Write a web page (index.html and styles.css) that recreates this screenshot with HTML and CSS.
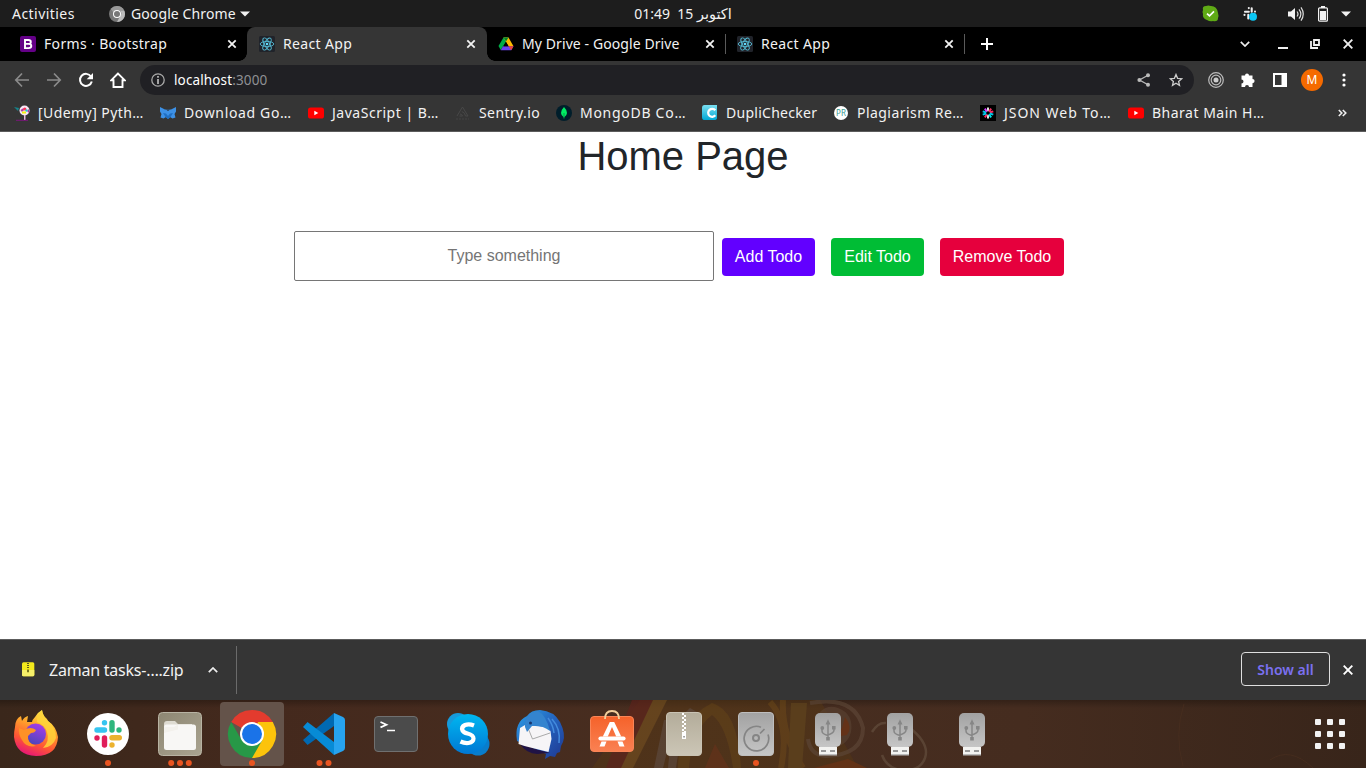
FILE: index.html
```html
<!DOCTYPE html>
<html lang="en">
<head>
<meta charset="utf-8">
<title>React App</title>
<link rel="stylesheet" href="styles.css">
</head>
<body>
<svg class="defs" width="0" height="0" aria-hidden="true">
  <defs>
    <linearGradient id="gFox" x1=".7" y1="0" x2=".3" y2="1"><stop offset="0" stop-color="#fff44f"/><stop offset=".35" stop-color="#ffa42b"/><stop offset=".7" stop-color="#ff5634"/><stop offset="1" stop-color="#e5127b"/></linearGradient>
    <linearGradient id="gGlobe" x1=".7" y1="0" x2=".3" y2="1"><stop offset="0" stop-color="#a63bea"/><stop offset="1" stop-color="#4a46b8"/></linearGradient>
    <linearGradient id="gFiles" x1="0" y1="0" x2="1" y2="1"><stop offset="0" stop-color="#8d8672"/><stop offset="1" stop-color="#aaa491"/></linearGradient>
    <linearGradient id="gSkype" x1="0" y1="0" x2="0" y2="1"><stop offset="0" stop-color="#00b7f0"/><stop offset="1" stop-color="#0078d4"/></linearGradient>
    <linearGradient id="gBird" x1="0" y1="0" x2="1" y2="1"><stop offset="0" stop-color="#2ba0e8"/><stop offset=".5" stop-color="#2462bd"/><stop offset="1" stop-color="#1e3790"/></linearGradient>
    <linearGradient id="gSoft" x1="0" y1="0" x2="0" y2="1"><stop offset="0" stop-color="#f5622a"/><stop offset="1" stop-color="#fa8153"/></linearGradient>
    <linearGradient id="gGrey" x1="0" y1="0" x2="0" y2="1"><stop offset="0" stop-color="#a2a2a2"/><stop offset="1" stop-color="#c6c6c6"/></linearGradient>
    <linearGradient id="gZip" x1="0" y1="0" x2="0" y2="1"><stop offset="0" stop-color="#b3ac9a"/><stop offset="1" stop-color="#ccc6b6"/></linearGradient>
    <linearGradient id="gDupli" x1="0" y1="0" x2="0" y2="1"><stop offset="0" stop-color="#7bdff0"/><stop offset="1" stop-color="#00a8d6"/></linearGradient>
    <symbol id="close" viewBox="0 0 16 16"><path d="M4.300 4.300l7.400 7.400M11.700 4.300l-7.400 7.400" stroke="currentColor" stroke-width="1.800" fill="none"/></symbol>
    <symbol id="react" viewBox="0 0 16 16"><rect width="16" height="16" rx="1.500" fill="#20232a"/><g fill="none" stroke="#55b9d2" stroke-width=".9"><ellipse cx="8" cy="8" rx="6.800" ry="2.600"/><ellipse cx="8" cy="8" rx="6.800" ry="2.600" transform="rotate(60 8 8)"/><ellipse cx="8" cy="8" rx="6.800" ry="2.600" transform="rotate(120 8 8)"/></g><circle cx="8" cy="8" r="1.300" fill="#61dafb"/></symbol>
    <symbol id="youtube" viewBox="0 0 16 16"><rect y="2.500" width="16" height="11" rx="2.600" fill="#f00"/><path d="M6.300 5.700v4.600l4-2.300z" fill="#fff"/></symbol>
    <symbol id="usb" viewBox="0 0 64 66"><path d="M23 45h18v8H23z" fill="#f3f3f1"/><path d="M23 52h18v1.500H23z" fill="#bbb"/><path d="M25 48h5v2h-5zM34 48h5v2h-5z" fill="#999"/><rect x="19" y="11" width="26" height="34" rx="5" fill="url(#gGrey)"/><path d="M32 22v14M26 27v2q0 3 6 4.500M38 27v1q0 3-6 5" stroke="#868686" stroke-width="1.500" fill="none"/><path d="M29.500 22.500h5L32 17.300z" fill="#868686"/><circle cx="26.300" cy="26" r="1.900" fill="#868686"/><path d="M36 24h3.600v3.600H36zM30.200 35h3.600v3.600h-3.600z" fill="#868686"/></symbol>
  </defs>
</svg>

<header class="topbar">
  <span class="activities">Activities</span>
  <span class="app-menu">
    <svg width="16" height="16" viewBox="0 0 16 16"><circle cx="8" cy="8" r="8" fill="#777"/><path d="M8 0a8 8 0 0 1 7 4.200H8A3.800 3.800 0 0 0 4.500 6.500L1.700 3A8 8 0 0 1 8 0z" fill="#999"/><path d="M15.200 4.500A8 8 0 0 1 8 16l3.300-6.200a3.800 3.800 0 0 0-.5-5.300z" fill="#bbb"/><circle cx="8" cy="8" r="4" fill="#fff"/><circle cx="8" cy="8" r="3" fill="#777"/></svg>
    <span class="app-name">Google Chrome</span>
    <svg width="10" height="6" viewBox="0 0 10 6"><path d="M0 .5h10L5 5.500z" fill="#f2f2f2"/></svg>
  </span>
  <span class="clock"><span class="digits">01:49&nbsp; 15 </span><span class="month">اكتوبر</span></span>
  <span class="tray">
    <svg width="17" height="17" viewBox="0 0 17 17"><path d="M1 5Q0 1 4 1q2-1 5 0 6 0 7 7 1 3 0 5 0 4-5 3-3 1-6-1Q0 13 1 9 0 7 1 5z" fill="#5faa15"/><path d="M5 8.600l2.500 2.300L12 6.300" stroke="#fff" stroke-width="1.700" fill="none"/></svg>
    <svg width="16" height="16" viewBox="0 0 16 16"><g stroke="#eee" stroke-width="2.100" stroke-linecap="round"><path d="M6.800 2v.1M3 5.700h3.800M9.700 2.200v3.500M13 5.500v.1M2.500 8.800v.1M6.300 8.800v3.600M9.300 8.800h3.700"/></g><circle cx="11" cy="10.800" r="4" fill="#0bc7f5"/></svg>
    <svg width="17" height="16" viewBox="0 0 17 16"><path d="M1 5.500h3L8 2v12l-4-3.500H1z" fill="#f2f2f2"/><path d="M10 5.500q2 2.500 0 5M12 3.300q3.700 4.700 0 9.400M14 1.300q4.500 6.700 0 13.400" fill="none" stroke="#ddd" stroke-width="1.200"/></svg>
    <svg width="10" height="16" viewBox="0 0 10 16"><path d="M3 0h4v2H3z" fill="#f2f2f2"/><rect x=".6" y="1.800" width="8.800" height="13.400" rx="1" fill="none" stroke="#f2f2f2" stroke-width="1.200"/><path d="M2 5h6v9H2z" fill="#f2f2f2"/></svg>
    <svg width="10" height="6" viewBox="0 0 10 6"><path d="M0 .5h10L5 5.500z" fill="#f2f2f2"/></svg>
  </span>
</header>

<nav class="tabstrip">
  <div class="tab">
    <svg class="fav" viewBox="0 0 16 16"><rect width="16" height="16" rx="2" fill="#640087"/><path d="M5 4h3.400q2.400 0 2.400 1.900Q10.800 7.900 8.600 7.900q2.700 0 2.700 2.100 0 2.100-2.700 2.100H5zM5 7.900h3.600" fill="none" stroke="#fff" stroke-width="1.900"/></svg>
    <span class="tab-title t-forms">Forms · Bootstrap</span><svg class="x"><use href="#close"/></svg>
  </div>
  <div class="tab active"><svg class="fav"><use href="#react"/></svg><span class="tab-title">React App</span><svg class="x"><use href="#close"/></svg></div>
  <div class="tab ruled">
    <svg class="fav" viewBox="0 0 16 16"><path d="M5.500 1.500h5L5 10.500l-2.300 3.600L.5 10z" fill="#00ac47"/><path d="M5.500 1.500h5l5 8.800h-5z" fill="#ffba00"/><path d="M5.500 1.500h5L8 5.600z" fill="#00832d"/><path d="M5 10.300h10.500l-2.300 4H2.700z" fill="#6a42f0"/><path d="M10.600 10.300h4.900l-2.300 4z" fill="#ea4335"/><path d="M8 6l2.500 4.300h-5z" fill="#000"/></svg>
    <span class="tab-title t-drive">My Drive - Google Drive</span><svg class="x"><use href="#close"/></svg>
  </div>
  <div class="tab ruled"><svg class="fav"><use href="#react"/></svg><span class="tab-title">React App</span><svg class="x"><use href="#close"/></svg></div>
  <svg class="new-tab" width="12" height="12" viewBox="0 0 12 12"><path d="M6 0v12M0 6h12" stroke="#fff" stroke-width="2"/></svg>
  <div class="win-controls">
    <svg width="10" height="6" viewBox="0 0 10 6"><path d="M.8.8L5 5 9.200.8" stroke="#eee" stroke-width="1.700" fill="none"/></svg>
    <svg width="10" height="10" viewBox="0 0 10 10"><path d="M0 9h10" stroke="#eee" stroke-width="2"/></svg>
    <svg width="10" height="10" viewBox="0 0 10 10"><path d="M4 1h5v5H4zM1 2v7h7" stroke="#eee" stroke-width="1.800" fill="none"/></svg>
    <svg width="10" height="10" viewBox="0 0 10 10"><path d="M.7.7l8.600 8.600M9.300.7L.7 9.300" stroke="#eee" stroke-width="1.900"/></svg>
  </div>
</nav>

<div class="toolbar">
  <svg width="16" height="16" viewBox="0 0 16 16"><path d="M15 8H2M8 1.500L1.800 8 8 14.500" stroke="#8b8b8b" stroke-width="1.700" fill="none"/></svg>
  <svg width="16" height="16" viewBox="0 0 16 16"><path d="M1 8h13M8 1.500L14.200 8 8 14.500" stroke="#8b8b8b" stroke-width="1.700" fill="none"/></svg>
  <svg width="16" height="16" viewBox="0 0 16 16"><path d="M13 4.500A6 6 0 1 0 13.800 9.500" stroke="#fff" stroke-width="2" fill="none"/><path d="M15 1v6.300H8.700z" fill="#fff"/></svg>
  <svg width="16" height="16" viewBox="0 0 16 16"><path d="M8 1.500L1.300 8.200H3.500V15h9V8.200h2.200z" stroke="#fff" stroke-width="1.900" fill="none"/></svg>
  <div class="omnibox">
    <svg width="14" height="14" viewBox="0 0 14 14"><circle cx="7" cy="7" r="6.200" stroke="#aaa" stroke-width="1.300" fill="none"/><path d="M7 3v1.700M7 6v5" stroke="#bbb" stroke-width="1.700"/></svg>
    <span class="url">localhost<span class="port">:3000</span></span>
    <svg width="14" height="14" viewBox="0 0 14 14"><path d="M11 2.200L2.500 7 11 11.800" stroke="#bbb" stroke-width="1.300" fill="none"/><g fill="#bbb"><circle cx="11" cy="2.300" r="2"/><circle cx="2.400" cy="7" r="2"/><circle cx="11" cy="11.700" r="2"/></g></svg>
    <svg class="star" width="14" height="14" viewBox="0 0 14 14"><path d="M7 1.500l1.600 3.800 4.100.4-3.100 2.700.9 4L7 10.300l-3.500 2.100.9-4L1.300 5.700l4.100-.4z" stroke="#ccc" stroke-width="1.300" fill="none"/></svg>
  </div>
  <svg class="target" width="16" height="16" viewBox="0 0 16 16"><g stroke="#bbb" stroke-width="1.200" fill="none"><circle cx="8" cy="8" r="7.300"/><circle cx="8" cy="8" r="4.800"/></g><circle cx="8" cy="8" r="2.500" fill="#ccc"/></svg>
  <svg class="puzzle" width="16" height="16" viewBox="0 0 16 16"><path d="M1.500 3.500H5a2 2 0 1 1 4 0h3.500V7a2 2 0 1 1 0 4.200V15H9a2 2 0 0 0-4 0H1.500v-3.500a2 2 0 0 0 0-4z" fill="#fff"/></svg>
  <svg class="panel" width="14" height="14" viewBox="0 0 14 14"><path d="M1 1h12v12H1z" fill="none" stroke="#fff" stroke-width="2"/><path d="M8.500 1H13v12H8.500z" fill="#fff"/></svg>
  <span class="avatar">M</span>
  <svg class="dots" width="4" height="14" viewBox="0 0 4 14"><g fill="#fff"><circle cx="2" cy="2" r="1.600"/><circle cx="2" cy="7" r="1.600"/><circle cx="2" cy="12" r="1.600"/></g></svg>
</div>

<div class="bookmarks">
  <a class="bm w146"><svg class="fav" viewBox="0 0 16 16"><path d="M0 2l5 1-1 3-2-2z" fill="#16848b"/><circle cx="10.500" cy="5.500" r="5" fill="#f7e8f5"/><path d="M6.500 5l3-2 .5 2-2 2zM13 6l2-2v4z" fill="#ae3aa4"/><circle cx="10.800" cy="4" r="1.600" fill="#f35"/><circle cx="12.500" cy="5.500" r="1.200" fill="#2cc"/><path d="M8 6.500h4v2H8z" fill="#f2f20a"/><path d="M10 10h1.500v5H10z" fill="#e5b8df"/><path d="M2 15.300h12" stroke="#7c167c"/></svg><span class="b1">[Udemy] Pyth…</span></a>
  <a class="bm w148"><svg class="fav" viewBox="0 0 16 16"><path d="M0 2l5 2.500h6L16 2v4.500l-1.500 2.500 1 3.500-3 1L10 12l-2 2-2-2-2.500 1.500-3-1 1-3.500L0 6.500z" fill="#3d91e6"/><path d="M3 8l3 .5L8 11l2-2.500L13 8l-2.500 4L8 14l-2.500-2z" fill="#1f6fc4"/><path d="M6 4.500h4L8 6z" fill="#2b333c"/></svg><span class="b2">Download Go…</span></a>
  <a class="bm w147"><svg class="fav"><use href="#youtube"/></svg><span class="b3">JavaScript | B…</span></a>
  <a class="bm w101"><svg class="fav" viewBox="0 0 16 16"><path d="M2 11L7.500 2 13 11h-2.500Q10 7.500 6.800 6.500M4.500 11h3Q7 9 5 9" fill="none" stroke="#484848" stroke-width="1"/><path d="M1 14h13" stroke="#444" stroke-dasharray="2 1"/></svg><span class="b4">Sentry.io</span></a>
  <a class="bm w146"><svg class="fav" viewBox="0 0 16 16"><circle cx="8" cy="8" r="8" fill="#001e2b"/><path d="M8 2q-3 3-3 6 0 2.500 3 4.500 3-2 3-4.500 0-3-3-6z" fill="#00ed64"/><path d="M8 8v5.500" stroke="#00a04b"/></svg><span class="b5">MongoDB Co…</span></a>
  <a class="bm w131"><svg class="fav" viewBox="0 0 16 16"><path d="M2.500 0H15v13q0 2-3 2H2Q0 15 0 12V3q0-3 2.500-3z" fill="url(#gDupli)"/><path d="M13.300 5.300A4 4 0 1 0 13.300 10.300" fill="none" stroke="#fff" stroke-width="2.200"/></svg><span class="b6">DupliChecker</span></a>
  <a class="bm w147"><svg class="fav" viewBox="0 0 16 16"><circle cx="8" cy="8" r="7" fill="#fff"/><text x="8" y="10.700" text-anchor="middle" font-size="8" fill="#3b9c93" font-family="Noto Sans, sans-serif">PR</text></svg><span class="b7">Plagiarism Re…</span></a>
  <a class="bm w148"><svg class="fav" viewBox="0 0 16 16"><path d="M0 0h16v16H0z" fill="#000"/><g stroke-width="1.900"><path d="M8 6.300V2.500M8 9.700v3.800" stroke="#eee"/><path d="M9 6.600l2.200-3M7 9.400l-2.200 3M9.700 7.500l3.600-1.200" stroke="#fb2e62"/><path d="M6.300 8.500L2.700 9.700M9.700 8.500l3.600 1.200M6.300 7.500L2.700 6.300" stroke="#00c6e8"/><path d="M9 9.400l2.200 3" stroke="#00e7e7"/><path d="M7 6.600l-2.200-3" stroke="#d63aff"/></g></svg><span class="b8">JSON Web To…</span></a>
  <a class="bm"><svg class="fav"><use href="#youtube"/></svg><span class="b9">Bharat Main H…</span></a>
  <svg class="more" width="9" height="8" viewBox="0 0 9 8"><path d="M.8 1l3 3-3 3M4.800 1l3 3-3 3" fill="none" stroke="#eee" stroke-width="1.600"/></svg>
</div>

<main class="page">
  <h1>Home Page</h1>
  <form class="todo">
    <input type="text" placeholder="Type something">
    <button type="button" class="btn add">Add Todo</button>
    <button type="button" class="btn edit">Edit Todo</button>
    <button type="button" class="btn remove">Remove Todo</button>
  </form>
</main>

<div class="downloads">
  <div class="file">
    <svg width="14" height="16" viewBox="0 0 14 16"><rect x="1" y=".3" width="12.300" height="14" rx="1.500" fill="#f3e91c"/><path d="M1 8h12.300v4.800q0 1.500-1.500 1.500H2.500Q1 14.300 1 12.800z" fill="#f6f06a"/><path d="M7 1v6" stroke="#5c5a1e" stroke-width="2" stroke-dasharray="1 1"/><path d="M6 7.500h2v2.800H6z" fill="#77751b"/></svg>
    <span class="file-name">Zaman tasks-….zip</span>
    <svg class="chev" width="10" height="6" viewBox="0 0 10 6"><path d="M.8 5.200L5 1l4.200 4.200" stroke="#eee" stroke-width="1.700" fill="none"/></svg>
  </div>
  <button type="button" class="show-all">Show all</button>
  <svg class="close-bar" width="10" height="10" viewBox="0 0 10 10"><path d="M.7.7l8.600 8.600M9.300.7L.7 9.300" stroke="#fff" stroke-width="1.900"/></svg>
</div>

<footer class="dock">
  <svg class="wallpaper" viewBox="0 0 1366 68" width="1366" height="68" fill="none">
    <path d="M640 0h180l38 68H592z" fill="#593a14" opacity=".65"/>
    <path d="M632 0h21l-22 68h-25z" fill="#66201b" opacity=".8"/>
    <path d="M653 0h14l-34 68h-12z" fill="#75501d"/>
    <path d="M664 20l-10 48h9l12-48zM690 8q-19 16-22 60h8q5-40 21-56z" fill="#68574c" opacity=".7"/>
    <path d="M678 68q0-48 34-65 26 7 29 65h-8q-6-42-21-53-20 15-23 53z" fill="#785213" opacity=".5"/>
    <path d="M705 68l10-24 14 24z" fill="#7b3518" opacity=".6"/>
    <path d="M770 2q20 22 11 66M783 0q-2 34 20 68" stroke="#765017" stroke-width="6" opacity=".7"/>
    <path d="M791 3h16l-5 65h-14z" fill="#65481b"/>
    <path d="M820 12q8-8 18-4 16 6 13 24-4 16-24 16" fill="#66503f" opacity=".6"/>
    <path d="M810 3q45-8 53 25 0 27-37 28-16-1-18-17" stroke="#66503f" stroke-width="4" opacity=".75"/>
    <path d="M845 17q8 10 2 18l-13 2 8-9z" fill="#743515"/>
    <path d="M814 68l34-9 19 9z" fill="#723512"/>
    <path d="M872 32q6-10 14-9M910 28q20 16 15 30-5 14-25 12-14-3-18-15" stroke="#65503f" stroke-width="2.500"/>
    <path d="M1184 4q-10 30-1 62M1270 60q20-14 43 8" stroke="#4b3020"/>
  </svg>
  <div class="launcher"><svg viewBox="0 0 64 66"><path d="M11 25q0-8 6-11l1 5q2-4 6-5l-1 6h5q0-2 3-5 3-5 7-7 1 6 5 9l1 2q8 5 10 16-1 19-22 19-20-1-22-19 0-6 1-10z" fill="url(#gFox)"/><circle cx="31.500" cy="32" r="10.500" fill="url(#gGlobe)"/><path d="M38 8q1 7 5 10 9 7 9 18-3 9-13 10 7-7 4-16-2-7-10-10-1-6 5-12z" fill="#ffd43a" opacity=".85"/><path d="M15 26l5 2q7-4 12 0-1 3-5 3l-3 3q-1 7 8 10-10 2-14-6-4-6-3-12z" fill="#ff9126"/></svg></div>
  <div class="launcher"><svg viewBox="0 0 64 66"><circle cx="32" cy="32" r="21" fill="#fff"/><g stroke-width="5.400" stroke-linecap="round"><path d="M28.500 28h-7.500M28.500 20.700v.1" stroke="#36c5f0"/><path d="M36 20.700v7.300M43 28v.1" stroke="#2eb67d"/><path d="M36 35.800h7.300M36 43v.1" stroke="#ecb22e"/><path d="M28.500 36v7M21 36v.1" stroke="#e01e5a"/></g><circle cx="32" cy="61" r="3" fill="#e95420"/></svg></div>
  <div class="launcher"><svg viewBox="0 0 64 66"><rect x="10.500" y="10.500" width="43" height="43" rx="4" fill="url(#gFiles)" stroke="#b8b3a3"/><path d="M16 22q0-3 3-3h8l3 3h14v6H16z" fill="#dedbd1"/><rect x="16" y="22.500" width="32" height="25.500" rx="2.500" fill="#f8f7f5"/><path d="M16 31v-5q0-1 2-1h8l4-2.500v5z" fill="#f3f1ec"/><g fill="#e95420"><circle cx="23.200" cy="61" r="3"/><circle cx="32" cy="61" r="3"/><circle cx="40.800" cy="61" r="3"/></g></svg></div>
  <div class="launcher focused"><svg viewBox="0 0 64 66"><path d="M32 32L11.200 20A24 24 0 0 1 52.800 20z" fill="#e33b2e"/><path d="M52.800 20A24 24 0 0 1 32 56l-1-10 7-26z" fill="#fcc30b"/><path d="M11.200 20A24 24 0 0 0 32 56l10.400-18L32 32l-10.400 6z" fill="#279847"/><circle cx="32" cy="32" r="12" fill="#fff"/><circle cx="32" cy="32" r="10" fill="#1a73e8"/><circle cx="32" cy="61" r="3" fill="#e95420"/></svg></div>
  <div class="launcher"><svg viewBox="0 0 64 66"><path d="M11 38l4.500 5L42 24V11z" fill="#0069b2"/><path d="M11 25l4.500-5L42 40v13z" fill="#078bd6"/><path d="M42 11l9 4q2 1 2 3v28q0 2-2 3l-9 4z" fill="#27a3ef"/><g fill="#e95420"><circle cx="27.500" cy="61" r="3"/><circle cx="36.500" cy="61" r="3"/></g></svg></div>
  <div class="launcher"><svg viewBox="0 0 64 66"><rect x="10.500" y="14.500" width="43" height="35" rx="3.500" fill="#4b4b4b" stroke="#707070"/><path d="M16.500 20l6 2.700-6 2.700M23 28.500h8" stroke="#fff" stroke-width="1.700" fill="none"/></svg></div>
  <div class="launcher"><svg viewBox="0 0 64 66"><circle cx="22" cy="22" r="11" fill="#169adb"/><circle cx="42" cy="42" r="11.500" fill="#087dcc"/><circle cx="32" cy="32" r="20" fill="url(#gSkype)"/><path d="M38 23.500q-5-2-9-.5-4 2-2.500 5.500 1 2 5 3 6 1.500 6 5t-5 4.500q-4 .5-8-1.500" stroke="#fff" stroke-width="4.200" fill="none"/></svg></div>
  <div class="launcher"><svg viewBox="0 0 64 66"><path d="M9 39Q6 20 19 14q4-6 13-6 14 1 20 12 6 12 3 20l-2 4-1 6-3 1-2 4-5-1-5 3 1-5z" fill="url(#gBird)"/><path d="M12 42l8 3 22 6-8 .5Q20 54 12 42z" fill="#201346"/><path d="M12 26l5-3 21 2 4.500 4 1 8-3 13-24-6-6-2z" fill="#f6f5f7"/><path d="M20 26l4.500 11L42 31" stroke="#aaa" fill="none"/><path d="M17 25q-1-14 13-16 8 4 12 20-8-6-18-5l-5 6z" fill="#3484cf"/><circle cx="22.500" cy="21" r="1.500" fill="#17346e"/><path d="M44 17q9 10 7 24M40 16q5 7 6 15" fill="none" stroke="#438bdd" stroke-width="1.500"/></svg></div>
  <div class="launcher"><svg viewBox="0 0 64 66"><rect x="10.500" y="14.500" width="43" height="35" rx="3.500" fill="url(#gSoft)" stroke="#f98557"/><path d="M25 17q0-8 7-8t7 8" stroke="#f3cf9b" stroke-width="1.800" fill="none"/><path d="M29.800 20h4.400l7 14.500h-5L32 25l-4.200 9.500h-5zM21.500 39.500h5l-2 5h-5zM37.500 39.500h5l2 5h-5z" fill="#fff"/><path d="M20.500 36.500h23" stroke="#fff" stroke-width="4.200" stroke-linecap="round"/></svg></div>
  <div class="launcher"><svg viewBox="0 0 64 66"><rect x="14.500" y="10.500" width="35" height="43" rx="3.500" fill="url(#gZip)" stroke="#c9c3b4"/><path d="M31 11v19M33 13v17" stroke="#fff" stroke-width="2" stroke-dasharray="2 2"/><path d="M30 30h4v7h-4z" fill="#fff"/><path d="M31.300 34h1.500v1.500h-1.500z" fill="#888"/></svg></div>
  <div class="launcher"><svg viewBox="0 0 64 66"><rect x="14.500" y="10.500" width="35" height="43" rx="3.500" fill="url(#gGrey)" stroke="#bebebe"/><path d="M44 32.500A12.300 12.300 0 1 1 37 25.200M36 31.500l4.500-4.500" fill="none" stroke="#858585" stroke-width="1.700"/><circle cx="32" cy="36" r="3" fill="none" stroke="#858585" stroke-width="2"/><circle cx="32" cy="61" r="3" fill="#e95420"/></svg></div>
  <div class="launcher"><svg><use href="#usb"/></svg></div>
  <div class="launcher"><svg><use href="#usb"/></svg></div>
  <div class="launcher"><svg><use href="#usb"/></svg></div>
  <div class="apps"><i></i><i></i><i></i><i></i><i></i><i></i><i></i><i></i><i></i></div>
</footer>
</body>
</html>
```

FILE: styles.css
```css
* { box-sizing: border-box; }
body {
  margin: 0;
  width: 1366px;
  height: 768px;
  overflow: hidden;
  display: flex;
  flex-direction: column;
  background: #fff;
  color: #f2f2f2;
  font: 14px/20px "Noto Sans", "DejaVu Sans", sans-serif;
}
svg { display: block; flex: none; }
.defs { position: absolute; }
.fav { width: 16px; height: 16px; }

.topbar {
  flex: none;
  height: 27px;
  padding: 0 15px 0 12px;
  display: grid;
  grid-template-columns: 1fr auto 1fr;
  grid-template-areas: "left clock tray";
  align-items: center;
  background: #1d1d1d;
}
.activities, .app-menu { grid-area: left; }
.activities { letter-spacing: .45px; }
.app-menu { margin-left: 97px; display: flex; align-items: center; gap: 6px; }
.app-name { margin-right: -2px; letter-spacing: .1px; }
.clock { grid-area: clock; padding-left: 3px; font-size: 14px; white-space: nowrap; }
.digits { letter-spacing: .1px; }
.month { font-size: 14.5px; }
.tray { grid-area: tray; display: flex; align-items: center; justify-content: flex-end; }
.tray svg:nth-child(1) { margin-right: 23px; }
.tray svg:nth-child(2) { margin-right: 29px; }
.tray svg:nth-child(3) { margin-right: 14px; }
.tray svg:nth-child(4) { margin-right: 13px; }

.tabstrip {
  flex: none;
  height: 34px;
  padding: 0 13px 0 8px;
  display: flex;
  align-items: center;
  background: #000;
}
.tab {
  position: relative;
  width: 239px;
  height: 34px;
  padding: 0 7px 0 12px;
  display: flex;
  align-items: center;
}
.tab-title { margin-left: 8px; flex: 1; white-space: nowrap; letter-spacing: .35px; }
.t-drive { letter-spacing: .09px; }
.x { width: 16px; height: 16px; color: #f2f2f2; }
.active { width: 240px; margin-right: -1px; padding-right: 8px; background: #353535; border-radius: 8px 8px 0 0; }
.active::before, .active::after {
  content: "";
  position: absolute;
  z-index: 1;
  bottom: 0;
  width: 8px;
  height: 8px;
}
.active::before { left: -8px; background: radial-gradient(circle at 0 0, #000 7.5px, #353535 8px); }
.active::after { right: -8px; background: radial-gradient(circle at 100% 0, #000 7.5px, #353535 8px); }
.ruled::after { content: ""; position: absolute; right: -1px; top: 7px; width: 1px; height: 20px; background: #5a5a5a; }
.new-tab { margin-left: 17px; }
.win-controls { margin-left: auto; display: flex; align-items: center; }
.win-controls svg:nth-child(1) { margin-right: 28px; }
.win-controls svg:nth-child(2) { margin-right: 22px; }
.win-controls svg:nth-child(3) { margin-right: 23px; }

.toolbar {
  flex: none;
  height: 38px;
  padding: 0 20px 0 14px;
  display: flex;
  align-items: center;
  gap: 16px;
  background: #353535;
}
.omnibox {
  width: 1054px;
  height: 30px;
  margin-left: -2px;
  padding: 0 11px;
  border-radius: 15px;
  display: flex;
  align-items: center;
  background: #202024;
}
.url { margin-left: 9px; flex: 1; color: #fff; font-size: 13.5px; letter-spacing: .13px; }
.port { color: #8f9094; }
.star { margin-left: 18px; }
.target { margin-left: -2px; }
.panel { margin-left: 1px; }
.avatar {
  width: 22px;
  height: 22px;
  margin-left: -2px;
  border-radius: 50%;
  background: #f56a00;
  color: #fff;
  font-size: 12px;
  line-height: 22px;
  text-align: center;
}
.dots { margin-left: 3px; }

.bookmarks {
  flex: none;
  height: 33px;
  padding: 0 19px 5px 14px;
  display: flex;
  align-items: center;
  background: #353535;
  border-bottom: 1px solid #5c5c5c;
}
.bm { display: flex; align-items: center; gap: 8px; white-space: nowrap; }
.w101 { width: 101px; }
.w131 { width: 131px; }
.w146 { width: 146px; }
.w147 { width: 147px; }
.w148 { width: 148px; }
.b1 { letter-spacing: .43px; }
.b2 { letter-spacing: .65px; }
.b3 { letter-spacing: .52px; }
.b4 { letter-spacing: .4px; }
.b5 { letter-spacing: .72px; }
.b6 { letter-spacing: .27px; }
.b7 { letter-spacing: .45px; }
.b8 { letter-spacing: .97px; }
.b9 { letter-spacing: .5px; }
.more { margin-left: auto; }

.page {
  flex: 1;
  background: #fff;
  font-family: "Liberation Sans", Arial, sans-serif;
}
.page h1 {
  margin: 0;
  color: #212529;
  font-size: 40px;
  font-weight: 400;
  line-height: 48px;
  text-align: center;
}
.todo { margin: 51px 0 0 294px; display: flex; align-items: flex-start; }
.todo input {
  width: 420px;
  height: 50px;
  margin: 0 8px 0 0;
  padding: 1px 2px;
  border: 1px solid #767676;
  border-radius: 2px;
  font: 16px "Liberation Sans", Arial, sans-serif;
  text-align: center;
}
.todo input::placeholder { color: #757575; }
.btn {
  height: 38px;
  margin: 7px 16px 0 0;
  padding: 0;
  border: 0;
  border-radius: 4px;
  color: #fff;
  font: 16px/24px "Liberation Sans", Arial, sans-serif;
}
.add { width: 93px; background: #6200ff; }
.edit { width: 93px; background: #00bd35; }
.remove { width: 124px; background: #e6003d; }

.downloads {
  flex: none;
  height: 61px;
  padding: 0 13px 0 21px;
  display: flex;
  align-items: center;
  background: #353535;
  border-top: 1px solid #5c5c5c;
}
.file {
  width: 216px;
  height: 48px;
  display: flex;
  align-items: center;
  border-right: 1px solid #6b6b6b;
}
.file-name { width: 159px; margin-left: 14px; font-size: 16px; letter-spacing: -.23px; white-space: nowrap; }
.show-all {
  width: 89px;
  height: 34px;
  margin: 0 13px 2px auto;
  padding: 0;
  border: 1px solid #dedede;
  border-radius: 4px;
  background: none;
  color: #7b70f0;
  font: 600 14px "Noto Sans", sans-serif;
}

.dock {
  position: relative;
  flex: none;
  height: 68px;
  padding: 2px 21px 2px 4px;
  display: flex;
  gap: 8px;
  background: linear-gradient(180deg, rgba(0, 0, 0, .25), transparent 8px), linear-gradient(90deg, #3a271b, #44291d 20%, #482e20 50%, #452c1f 75%, #38251a);
}
.wallpaper { position: absolute; left: 0; top: 0; opacity: .65; }
.launcher { position: relative; width: 64px; height: 64px; border-radius: 4px; }
.launcher svg { width: 64px; height: 66px; }
.focused { background: #64534a; }
.apps {
  margin: 17px 0 0 auto;
  display: grid;
  grid-template-columns: repeat(3, 6px);
  grid-auto-rows: 6px;
  gap: 6px;
}
.apps i { border-radius: 1px; background: #f2f2f2; }
```
